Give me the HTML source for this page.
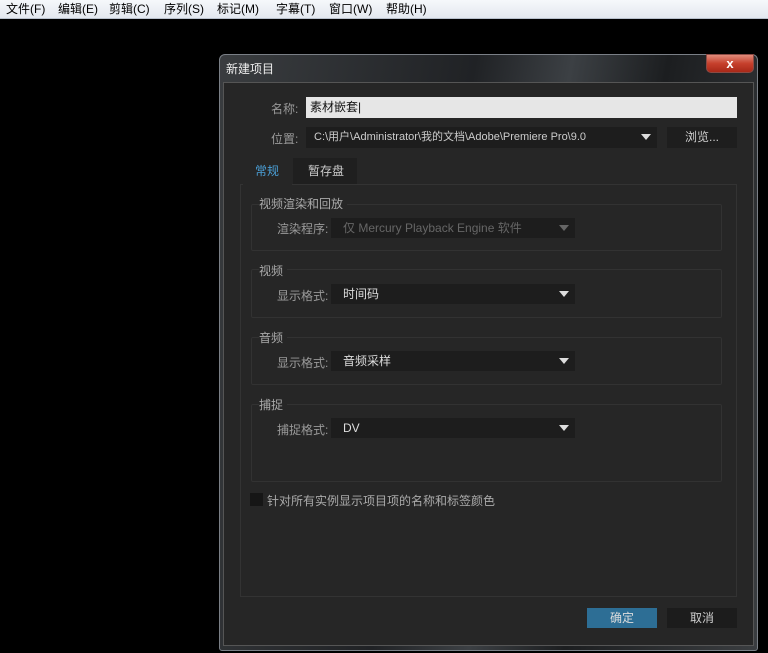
<!DOCTYPE html>
<html><head><meta charset="utf-8"><style>
*{margin:0;padding:0;box-sizing:border-box}
body{width:768px;height:653px;background:#000;position:relative;overflow:hidden;font-family:"Liberation Sans","Noto Sans CJK SC",sans-serif;font-size:12px;color:#bbb}
.a{position:absolute}
#menu{left:0;top:0;width:768px;height:19px;background:linear-gradient(#f6f8fb,#e3e8ef);border-bottom:1px solid #b8c0cc;color:#000;font-size:12px;line-height:19px}
#menu span{position:absolute;top:0}
#dlg{left:219px;top:54px;width:539px;height:597px;border:1px solid #7a7f86;border-radius:6px 6px 3px 3px;background:linear-gradient(100deg,#3a3d40 0%,#202225 40%,#3c4044 55%,#1c1e20 70%,#3a3d40 100%)}
#title{left:6px;top:5px;color:#eee;font-size:12px}
#close{left:486px;top:-1px;width:48px;height:19px;border:1px solid #8a4a44;border-radius:0 0 5px 5px;background:linear-gradient(#e08a7a,#c6402c 50%,#a82818);color:#fff;font-weight:bold;text-align:center;line-height:17px;font-size:13px}
#panel{left:3px;top:27px;width:531px;height:564px;background:#262626;border:1px solid #555}
.lbl{color:#9a9a9a;font-size:12px}
.dd{background:#1d1d1d;height:20px;line-height:20px;padding-left:12px;color:#ddd}
.tri{position:absolute;right:6px;top:7px;width:0;height:0;border-left:5px solid transparent;border-right:5px solid transparent;border-top:6px solid #ddd}
.grp{border:1px solid #323232;border-radius:2px;background:#262626}
.gt{background:#262626;padding-right:4px;color:#aaa}
</style></head><body>
<div id="menu" class="a"><span style="left:6px">文件(F)</span><span style="left:58px">编辑(E)</span><span style="left:109px">剪辑(C)</span><span style="left:164px">序列(S)</span><span style="left:217px">标记(M)</span><span style="left:276px">字幕(T)</span><span style="left:329px">窗口(W)</span><span style="left:386px">帮助(H)</span></div>
<div id="dlg" class="a">
<div id="title" class="a">新建项目</div>
<div id="close" class="a">x</div>
<div id="panel" class="a"></div>
</div>
<div class="a lbl" style="left:271px;top:100px">名称:</div>
<div class="a" style="left:306px;top:97px;width:431px;height:21px;background:#e6e6e6;color:#111;line-height:21px;padding-left:4px">素材嵌套|</div>
<div class="a lbl" style="left:271px;top:130px">位置:</div>
<div class="a dd" style="left:306px;top:127px;width:351px;height:21px;color:#ccc;font-size:11px;padding-left:8px">C:\用户\Administrator\我的文档\Adobe\Premiere Pro\9.0<div class="tri"></div></div>
<div class="a" style="left:667px;top:127px;width:70px;height:21px;background:#1e1e1e;color:#ccc;text-align:center;line-height:21px">浏览...</div>
<div class="a" style="left:240px;top:184px;width:497px;height:413px;border:1px solid #333;background:#262626"></div>
<div class="a" style="left:243px;top:158px;width:49px;height:27px;background:#262626;color:#4a9fd6;line-height:27px;padding-left:12px">常规</div>
<div class="a" style="left:293px;top:158px;width:64px;height:26px;background:#1f1f1f;color:#ccc;line-height:27px;padding-left:15px">暂存盘</div>

<div class="a grp" style="left:251px;top:204px;width:471px;height:47px"></div>
<div class="a gt" style="left:259px;top:195px">视频渲染和回放</div>
<div class="a lbl" style="left:277px;top:220px">渲染程序:</div>
<div class="a dd" style="left:331px;top:218px;width:244px;color:#666">仅 Mercury Playback Engine 软件<div class="tri" style="border-top-color:#666"></div></div>

<div class="a grp" style="left:251px;top:269px;width:471px;height:49px"></div>
<div class="a gt" style="left:259px;top:262px">视频</div>
<div class="a lbl" style="left:277px;top:287px">显示格式:</div>
<div class="a dd" style="left:331px;top:284px;width:244px">时间码<div class="tri"></div></div>

<div class="a grp" style="left:251px;top:337px;width:471px;height:48px"></div>
<div class="a gt" style="left:259px;top:329px">音频</div>
<div class="a lbl" style="left:277px;top:354px">显示格式:</div>
<div class="a dd" style="left:331px;top:351px;width:244px">音频采样<div class="tri"></div></div>

<div class="a grp" style="left:251px;top:404px;width:471px;height:78px"></div>
<div class="a gt" style="left:259px;top:396px">捕捉</div>
<div class="a lbl" style="left:277px;top:421px">捕捉格式:</div>
<div class="a dd" style="left:331px;top:418px;width:244px">DV<div class="tri"></div></div>

<div class="a" style="left:250px;top:493px;width:13px;height:13px;background:#161616"></div>
<div class="a" style="left:267px;top:492px;color:#aaa">针对所有实例显示项目项的名称和标签颜色</div>

<div class="a" style="left:587px;top:608px;width:70px;height:20px;background:#2d6e95;color:#ddd;text-align:center;line-height:20px">确定</div>
<div class="a" style="left:667px;top:608px;width:70px;height:20px;background:#1c1c1c;color:#ccc;text-align:center;line-height:20px">取消</div>
</body></html>
